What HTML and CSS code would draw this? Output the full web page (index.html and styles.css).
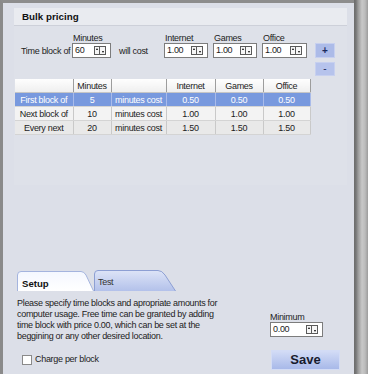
FILE: index.html
```html
<!DOCTYPE html>
<html>
<head>
<meta charset="utf-8">
<link rel="stylesheet" href="styles.css">
</head>
<body>
<div class="frame">
  <div class="main">
    <section class="group">
      <div class="group-title">Bulk pricing</div>
      <div class="entry">
        <span class="lead">Time block of</span>
        <div class="field f-min">
          <span class="lbl">Minutes</span>
          <div class="spin"><span class="val">60</span><span class="arrows"><i class="up"></i><i class="dn"></i></span></div>
        </div>
        <span class="mid">will cost</span>
        <div class="field f-int">
          <span class="lbl">Internet</span>
          <div class="spin"><span class="val">1.00</span><span class="arrows"><i class="up"></i><i class="dn"></i></span></div>
        </div>
        <div class="field f-games">
          <span class="lbl">Games</span>
          <div class="spin"><span class="val">1.00</span><span class="arrows"><i class="up"></i><i class="dn"></i></span></div>
        </div>
        <div class="field f-off">
          <span class="lbl">Office</span>
          <div class="spin"><span class="val">1.00</span><span class="arrows"><i class="up"></i><i class="dn"></i></span></div>
        </div>
        <div class="pm">
          <button class="pm-btn">+</button>
          <button class="pm-btn minus">-</button>
        </div>
      </div>
      <table class="grid">
        <colgroup>
          <col class="c1"><col class="c2"><col class="c3"><col class="c4"><col class="c5"><col class="c6">
        </colgroup>
        <thead>
          <tr><th></th><th>Minutes</th><th></th><th>Internet</th><th>Games</th><th>Office</th></tr>
        </thead>
        <tbody>
          <tr class="sel"><td>First block of</td><td>5</td><td>minutes cost</td><td>0.50</td><td>0.50</td><td>0.50</td></tr>
          <tr class="r2"><td>Next block of</td><td>10</td><td>minutes cost</td><td>1.00</td><td>1.00</td><td>1.00</td></tr>
          <tr class="r3"><td>Every next</td><td>20</td><td>minutes cost</td><td>1.50</td><td>1.50</td><td>1.50</td></tr>
        </tbody>
      </table>
    </section>

    <div class="tabs">
      <div class="tab setup">
        <svg class="tab-shape" width="77" height="20" viewBox="0 0 77 20">
          <defs>
            <linearGradient id="gs" x1="0" y1="0" x2="0" y2="1">
              <stop offset="0" stop-color="#f4f7ff"/>
              <stop offset="1" stop-color="#ffffff"/>
            </linearGradient>
          </defs>
          <path d="M0.5 20 V4 Q0.5 0.5 4 0.5 H64 Q67 0.5 69 4 L76.5 20" fill="url(#gs)" stroke="#a4b4de"/>
        </svg>
        <span class="tab-label">Setup</span>
      </div>
      <div class="tab test">
        <svg class="tab-shape" width="82" height="21" viewBox="0 0 82 21">
          <defs>
            <linearGradient id="gt" x1="0" y1="0" x2="0" y2="1">
              <stop offset="0" stop-color="#dde4f7"/>
              <stop offset="1" stop-color="#b3c1ea"/>
            </linearGradient>
          </defs>
          <path d="M0.5 21 V4 Q0.5 0.5 4 0.5 H64 Q68 0.5 71 5 L81.5 21" fill="url(#gt)" stroke="#8d9fd3"/>
        </svg>
        <span class="tab-label">Test</span>
      </div>
    </div>

    <div class="bottom">
      <div class="left">
        <p class="info">Please specify time blocks and apropriate amounts for<br>computer usage. Free time can be granted by adding<br>time block with price 0.00, which can be set at the<br>beggining or any other desired location.</p>
        <label class="check"><span class="box"></span>Charge per block</label>
      </div>
      <div class="right">
        <span class="lbl">Minimum</span>
        <div class="spin min"><span class="val">0.00</span><span class="arrows"><i class="up"></i><i class="dn"></i></span></div>
        <button class="save">Save</button>
      </div>
    </div>
  </div>
  <div class="rail"></div>
</div>
</body>
</html>
```
FILE: styles.css
```css
html, body {
  margin: 0;
  padding: 0;
  height: 374px;
  overflow: hidden;
}

body {
  font-family: "Liberation Sans", Arial, sans-serif;
  font-size: 9px;
  letter-spacing: -0.3px;
  color: #1c1c1c;
}

.frame {
  display: flex;
  width: 368px;
  height: 374px;
}

.main {
  flex: 1;
  min-width: 0;
  border-left: 3px solid #8a8a8a;
  border-top: 3px solid #8d8d8d;
  background: #dcdfe8;
  display: flex;
  flex-direction: column;
}

.rail {
  width: 14px;
  background: linear-gradient(to right, #6c6c6c 0, #777 2px, #999 4px, #c8c8c8 8px, #bcbcbc 11px, #9c9c9c 14px);
}

/* group */
.group {
  margin: 5px 0 0 11px;
  width: 333px;
  height: 177px;
  background: #dee1e9;
}

.group-title {
  height: 18px;
  padding: 1px 0 0 8px;
  box-sizing: border-box;
  line-height: 16px;
  font-weight: bold;
  font-size: 9.8px;
  letter-spacing: 0;
  color: #111;
  background: #e9ebf0;
  border-bottom: 1px solid #cdd0d9;
}

.entry {
  display: flex;
  align-items: flex-start;
  padding: 7px 0 0 7px;
}

.lead {
  width: 51px;
  margin-top: 10px;
  line-height: 16px;
  white-space: nowrap;
}

.mid {
  width: 45px;
  padding-left: 8px;
  margin-top: 10px;
  line-height: 16px;
  white-space: nowrap;
}

.field {
  display: flex;
  flex-direction: column;
}

.lbl {
  height: 10px;
  line-height: 10px;
  padding-left: 1px;
  white-space: nowrap;
}

.f-min { width: 39px; }
.f-int { width: 44px; margin-right: 5px; }
.f-games { width: 44px; margin-right: 5px; }
.f-off { width: 45px; }

.spin {
  height: 15px;
  box-sizing: border-box;
  border: 1px solid #7c7c7c;
  background: #fff;
  display: flex;
  align-items: center;
  padding-left: 2px;
}

.val {
  flex: 1;
  line-height: 13px;
}

.arrows {
  display: flex;
  margin-right: 4px;
}

.arrows i {
  width: 4px;
  height: 7px;
  border: 1px solid #5a5a5a;
  background: #f6f6f6;
  display: flex;
  justify-content: center;
}

.arrows i + i {
  border-left: none;
}

.arrows .up {
  align-items: flex-start;
}

.arrows .dn {
  align-items: flex-end;
  width: 5px;
}

.arrows .up::after {
  content: "";
  margin-top: 1px;
  border-left: 1.5px solid transparent;
  border-right: 1.5px solid transparent;
  border-bottom: 2px solid #000;
}

.arrows .dn::after {
  content: "";
  margin-bottom: 1px;
  border-left: 1.5px solid transparent;
  border-right: 1.5px solid transparent;
  border-top: 2px solid #000;
}

.pm {
  display: flex;
  flex-direction: column;
  gap: 4px;
  margin: 10px 0 0 8px;
}

.pm-btn {
  width: 20px;
  height: 15px;
  padding: 0;
  border: 1px solid #c7d0ef;
  background: #acbbe8;
  color: #1b2a5c;
  font-family: "Liberation Sans", Arial, sans-serif;
  font-weight: bold;
  font-size: 10px;
  line-height: 12px;
}

.pm-btn.minus {
  height: 14px;
  background: #b6c3ec;
  font-weight: normal;
}

/* table */
.grid {
  margin: 3px 0 0 1px;
  width: 295px;
  border-collapse: collapse;
  table-layout: fixed;
}

.c1 { width: 58px; }
.c2 { width: 38px; }
.c3 { width: 55px; }
.c4 { width: 49px; }
.c5 { width: 48px; }
.c6 { width: 47px; }

.grid th {
  height: 13px;
  padding: 0;
  font-weight: normal;
  line-height: 12px;
  background: linear-gradient(#fefefe, #efefef);
  border-right: 1px solid #9d9d9d;
  border-bottom: 1px solid #c6c6c6;
  text-align: center;
}

.grid td {
  height: 13px;
  padding: 0;
  line-height: 12px;
  text-align: center;
  white-space: nowrap;
  border-right: 1px solid #c9c9c9;
  border-bottom: 1px solid #d4d4d4;
}

.grid tr.sel td {
  background: #7899de;
  color: #fff;
  border-right-color: #a9bbea;
}

.grid tr.r2 td { background: #f3f3f3; }
.grid tr.r3 td { background: #e9e9e9; }

/* tabs */
.tabs {
  display: flex;
  align-items: flex-end;
  height: 21px;
  margin-top: 85px;
  padding-left: 14px;
}

.tab {
  position: relative;
}

.tab-shape {
  position: absolute;
  left: 0;
  top: 0;
}

.tab-label {
  position: relative;
  display: block;
  line-height: 12px;
}

.tab.setup {
  width: 77px;
  height: 20px;
}

.tab.setup .tab-label {
  padding: 7px 0 0 5px;
  font-weight: bold;
  font-size: 9.6px;
  letter-spacing: 0;
  color: #111;
}

.tab.test {
  width: 82px;
  height: 21px;
}

.tab.test .tab-label {
  padding: 6px 0 0 4px;
  color: #333;
}

/* bottom */
.bottom {
  display: flex;
  flex: 1;
}

.left {
  padding-left: 14px;
}

.info {
  margin: 7px 0 0;
  line-height: 11px;
  white-space: nowrap;
}

.check {
  display: flex;
  align-items: center;
  gap: 3px;
  margin: 12px 0 0 5px;
  line-height: 11px;
}

.box {
  width: 10px;
  height: 10px;
  box-sizing: border-box;
  border: 1px solid #8a8a8a;
  background: #fff;
}

.right {
  margin-left: auto;
  margin-right: 14px;
  width: 70px;
  display: flex;
  flex-direction: column;
}

.right .lbl {
  margin-top: 21px;
  padding-left: 0;
}

.spin.min {
  width: 53px;
}

.save {
  margin: 13px 0 0 1px;
  width: 69px;
  height: 20px;
  padding: 0;
  border: 1px solid #d3dcf5;
  background: linear-gradient(#d3dcf6, #a8b9e9);
  color: #171b2e;
  font-family: "Liberation Sans", Arial, sans-serif;
  font-weight: bold;
  font-size: 13px;
  letter-spacing: 0;
  line-height: 18px;
}
```
